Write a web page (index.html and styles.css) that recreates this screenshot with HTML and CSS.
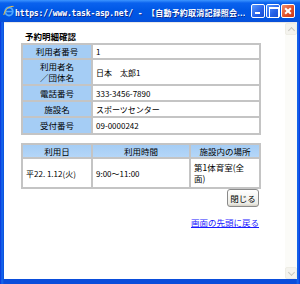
FILE: index.html
```html
<!DOCTYPE html>
<html lang="ja">
<head>
<meta charset="UTF-8">
<title>予約明細確認</title>
<link rel="stylesheet" href="styles.css">
</head>
<body>
<div class="window">
<div class="titlebar">
<svg class="app-icon" width="11" height="12" viewBox="0 0 11 12">
<ellipse cx="6" cy="6.5" rx="3.8" ry="4" fill="none" stroke="#4fa8ff" stroke-width="1.8"/>
<rect x="2.6" y="5.8" width="7" height="1.5" fill="#4fa8ff"/>
<path d="M0.8 10 C1.8 4.5 6.5 0.8 10.6 1.4" fill="none" stroke="#f0c040" stroke-width="1"/>
</svg>
<span class="title"><span class="title-url">https://www.task-asp.net/ - </span><span class="title-name">【自動予約取消記録照会...</span></span>
<div class="controls">
<span class="ctl ctl-min"></span>
<span class="ctl ctl-max"></span>
<span class="ctl ctl-close"></span>
</div>
</div>
<div class="client">
<div class="page">
<h1 class="page-title">予約明細確認</h1>
<table class="detail">
<tr class="r1"><th>利用者番号</th><td>1</td></tr>
<tr class="r2"><th>利用者名<br>／団体名</th><td>日本　太郎1</td></tr>
<tr><th>電話番号</th><td>333-3456-7890</td></tr>
<tr><th>施設名</th><td>スポーツセンター</td></tr>
<tr class="r5"><th>受付番号</th><td>09-0000242</td></tr>
</table>
<table class="usage">
<tr class="head"><th class="c1">利用日</th><th class="c2">利用時間</th><th class="c3">施設内の場所</th></tr>
<tr class="data"><td>平22. 1.12(火)</td><td>9:00～11:00</td><td class="place">第1体育室(全面)</td></tr>
</table>
<div class="actions"><button type="button" class="close-btn">閉じる</button></div>
<div class="top-link"><a href="#">画面の先頭に戻る</a></div>
</div>
<div class="scrollbar">
<span class="arrow arrow-up"></span>
<span class="track"></span>
<span class="arrow arrow-down"></span>
</div>
</div>
</div>
</body>
</html>
```

FILE: styles.css
```css
* {
margin: 0;
padding: 0;
box-sizing: border-box;
}
body {
background: #fff;
font-family: "Noto Sans CJK JP", "DejaVu Sans", sans-serif;
}
.window {
width: 300px;
height: 284px;
display: flex;
flex-direction: column;
background: linear-gradient(to right, #0831d9 0, #166aee 2px, #0a4ddb 4px, #0a4ddb 296px, #166aee 298px, #0831d9 300px);
overflow: hidden;
}
.titlebar {
height: 22px;
display: flex;
align-items: center;
padding: 0 5px 0 3px;
background: linear-gradient(to bottom, #3d95ff 0, #0a62ee 3px, #0058e6 45%, #0054e3 85%, #0a4fd6 100%);
color: #fff;
}
.app-icon {
flex: none;
margin-right: 1px;
}
.title {
flex: 1;
min-width: 0;
white-space: nowrap;
overflow: hidden;
font-weight: bold;
text-shadow: 1px 1px 0 #0a2a90;
line-height: 12px;
}
.title-url {
font-family: "DejaVu Sans Mono", monospace;
font-size: 8px;
letter-spacing: -0.1px;
}
.title-name {
font-family: "Noto Sans CJK JP", sans-serif;
font-size: 8px;
letter-spacing: 0.2px;
}
.controls {
display: flex;
gap: 1px;
margin-left: 6px;
}
.ctl {
width: 14px;
height: 14px;
border: 1px solid #fff;
border-radius: 2px;
background: linear-gradient(135deg, #5a9aff, #2460e8 60%, #1a4fd0);
position: relative;
}
.ctl-min::after {
content: "";
position: absolute;
left: 3px;
bottom: 3px;
width: 5px;
height: 2px;
background: #fff;
}
.ctl-max::after {
content: "";
position: absolute;
left: 2px;
top: 2px;
width: 8px;
height: 8px;
border: 1px solid #fff;
border-top-width: 2px;
}
.ctl-close {
background: linear-gradient(135deg, #f09070, #e0502a 55%, #c8381a);
}
.ctl-close::before,
.ctl-close::after {
content: "";
position: absolute;
left: 5px;
top: 2px;
width: 2px;
height: 8px;
background: #fff;
transform: rotate(45deg);
}
.ctl-close::after {
transform: rotate(-45deg);
}
.client {
flex: 1;
margin: 0 3px 5px 4px;
display: flex;
background: #fff;
border-top: 1px solid #e8e8e8;
}
.page {
flex: 1;
padding: 8px 0 0 17px;
color: #000;
}
.page-title {
font-size: 8.5px;
font-weight: bold;
line-height: 11px;
margin: 0 0 1px 4px;
}
table {
border-collapse: separate;
border-spacing: 0;
width: 240px;
border-top: 2px solid #c4c4c4;
border-left: 2px solid #c4c4c4;
}
th, td {
border-right: 2px solid #c4c4c4;
border-bottom: 2px solid #c4c4c4;
font-size: 8.5px;
font-weight: normal;
line-height: 11px;
vertical-align: middle;
}
td {
font-size: 8px;
padding-left: 3px;
}
.detail th {
width: 70px;
background: #a5cdf5;
text-align: center;
height: 16px;
}
.detail .r1 th {
height: 15px;
}
.detail .r2 th {
height: 26px;
}
.detail .r5 th {
height: 17px;
}
.usage {
margin-top: 8px;
}
.usage th {
background: linear-gradient(to bottom, #a5cdf5, #b4d6f8);
height: 14px;
text-align: center;
}
.usage td {
height: 30px;
}
.usage .place {
font-size: 8.5px;
padding-right: 8px;
}
.usage .c1 {
width: 70px;
}
.usage .c2 {
width: 98px;
}
.actions {
width: 240px;
display: flex;
justify-content: flex-end;
padding-right: 2px;
}
.close-btn {
width: 32px;
height: 18px;
font-family: "Noto Sans CJK JP", sans-serif;
font-size: 8.5px;
border: 1px solid #8a8a8a;
border-radius: 3px;
background: linear-gradient(to bottom, #fff, #ececE6 85%, #d6d0c4);
color: #000;
}
.top-link {
width: 240px;
text-align: right;
margin-top: 6px;
padding-right: 2px;
line-height: 12px;
}
.top-link a {
color: #1a1aff;
font-size: 8.5px;
}
.scrollbar {
width: 12px;
display: flex;
flex-direction: column;
background: #fbfbf8;
}
.arrow {
height: 12px;
border: 1px solid #eeede5;
border-radius: 2px;
background: #f4f3ee;
position: relative;
}
.arrow::after {
content: "";
position: absolute;
left: 3px;
top: 4px;
width: 4px;
height: 4px;
border-left: 1px solid #c8c8c0;
border-top: 1px solid #c8c8c0;
transform: rotate(45deg);
}
.arrow-down::after {
top: 2px;
transform: rotate(225deg);
}
.track {
flex: 1;
}
```
